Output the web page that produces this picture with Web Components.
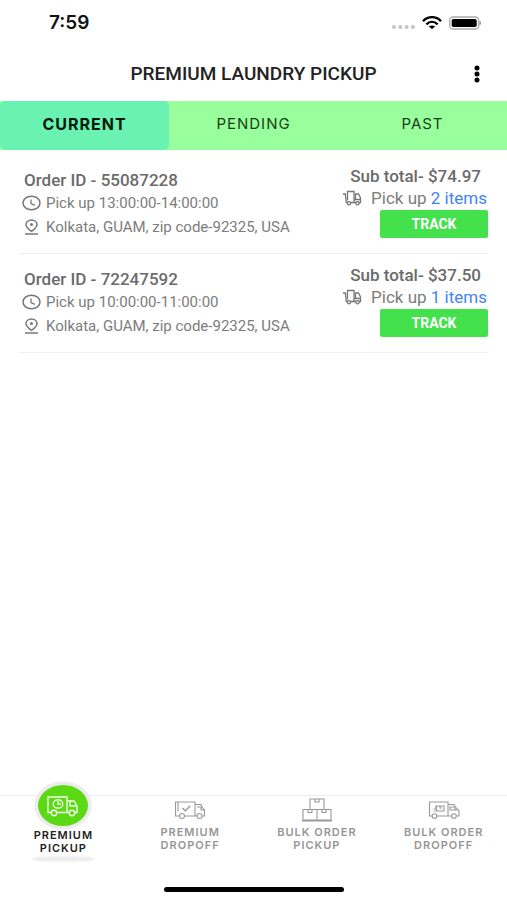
<!DOCTYPE html>
<html lang="en">
<head>
<meta charset="utf-8">
<meta name="viewport" content="width=device-width, initial-scale=1">
<title>Premium Laundry Pickup</title>
<style>
html, body { margin: 0; }
body { font-family: Roboto, "Liberation Sans", sans-serif; background: #fff; color: #222; }
</style>
</head>
<body>
<laundry-app></laundry-app>
<script>
const define = (name, html, setup) => {
  const template = document.createElement('template');
  template.innerHTML = html;
  customElements.define(name, class extends HTMLElement {
    constructor() {
      super();
      this.attachShadow({ mode: 'open' }).append(template.content.cloneNode(true));
    }
    connectedCallback() { if (setup) setup(this, this.shadowRoot); }
  });
};

define('status-bar', `
<style>
:host { display: flex; align-items: center; justify-content: space-between; height: 46px; padding: 0 26px 0 49px; color: #111; }
time { font-family: Inter, sans-serif; font-size: 19px; line-height: 24px; font-weight: 600; }
.signals { display: flex; align-items: center; gap: 7px; }
svg { display: block; }
</style>
<time>7:59</time>
<div class="signals">
  <svg width="23" height="16" viewBox="0 0 23 16" fill="#c4c4c4" aria-hidden="true"><circle cx="2" cy="12" r="2"/><circle cx="8.3" cy="12" r="2"/><circle cx="14.6" cy="12" r="2"/><circle cx="20.9" cy="12" r="2"/></svg>
  <svg width="20" height="14" viewBox="0 0 20 14" aria-hidden="true"><g fill="none" stroke="#000" stroke-width="2.4"><path d="M1 5.2C6-.2 14-.2 19 5.2"/><path d="M4.4 8.3c3.3-3.2 7.9-3.2 11.2 0"/></g><path d="M6.9 10.5c1.9-1.5 4.3-1.5 6.2 0L10 13z"/></svg>
  <svg width="32" height="14" viewBox="0 0 32 14" aria-hidden="true"><rect x=".7" y="1" width="29" height="12" rx="3.5" fill="#fff" stroke="#aaa" stroke-width="1.3"/><rect x="2.7" y="3" width="25" height="8" rx="1.8"/><path d="M31 5.3q1 1.7 0 3.4z" fill="#888" stroke="#888" stroke-width=".7"/></svg>
</div>`);

define('page-header', `
<style>
:host { display: grid; grid-template-columns: 1fr auto 1fr; align-items: center; height: 55px; padding: 0 18px; }
h1 { grid-column: 2; margin: 0; font-size: 19px; line-height: 24px; font-weight: 500; color: #222; }
button { justify-self: end; width: 24px; height: 32px; padding: 0; border: 0; background: none; }
svg { display: block; margin: auto; }
</style>
<h1><slot></slot></h1>
<button type="button" aria-label="More options"><svg width="8" height="18" viewBox="0 0 8 18"><circle cx="4" cy="3" r="2.5"/><circle cx="4" cy="9" r="2.5"/><circle cx="4" cy="15" r="2.5"/></svg></button>`);

define('tab-bar', `
<style>
:host { display: grid; grid-template-columns: repeat(3, 1fr); height: 49px; background: #99ff9c; }
</style>
<slot></slot>`);

define('tab-item', `
<style>
:host { display: block; }
button { width: 100%; height: 100%; padding: 0 0 3px; border: 0; border-radius: 5px; background: none; font-family: Inter, sans-serif; font-size: 15px; line-height: 20px; font-weight: 400; letter-spacing: 1px; color: #174018; }
:host([active]) button { background: #6af2b2; color: #001a0b; font-size: 16px; font-weight: 700; }
</style>
<button type="button"><slot></slot></button>`, (host, root) => {
  root.querySelector('button').setAttribute('aria-pressed', host.hasAttribute('active'));
});

define('order-card', `
<style>
:host { display: flex; justify-content: space-between; height: 98px; margin: 0 19px; border-bottom: 1px solid #efefef; color: #7c7c7c; }
.info { padding: 14px 0 0 3px; }
h2 { margin: 0 0 0 2px; font-size: 17px; line-height: 22px; font-weight: 500; color: #6b6b6b; }
p { margin: 0; display: flex; align-items: center; gap: 5px; height: 24px; font-size: 15px; line-height: 24px; white-space: nowrap; }
svg { flex: none; }
.summary { display: flex; flex-direction: column; align-items: flex-end; padding-top: 10px; }
.total { height: 22px; line-height: 22px; padding-right: 7px; font-size: 17px; font-weight: 500; color: #6b6b6b; }
.count { height: 22px; line-height: 22px; gap: 9px; font-size: 17px; padding-right: 1px; }
a { color: #3f86ee; text-decoration: none; }
button { width: 108px; height: 28px; margin-top: 1px; padding: 0; border: 0; border-radius: 2px; background: #43e24c; color: #fff; font-family: inherit; font-size: 14px; line-height: 20px; font-weight: 700; }
</style>
<div class="info">
  <h2>Order ID - <span id="number"></span></h2>
  <p><svg width="19" height="16" viewBox="0 0 19 16" fill="none" stroke="#777" aria-hidden="true"><ellipse cx="9.5" cy="8" rx="8.5" ry="6.8" stroke-width="1.5"/><path d="M9 4.5v4l3.8 1.8" stroke-width="1.3"/></svg><span>Pick up <span id="slot"></span></span></p>
  <p><svg width="19" height="16" viewBox="0 0 19 16" fill="none" stroke="#777" stroke-width="1.5" aria-hidden="true"><path d="M9.5 12.4C6 9.8 4 7.7 4 5.7 4 3 6.5 1 9.5 1S15 3 15 5.7c0 2-2 4.1-5.5 6.7z"/><path d="M3 15h13"/><circle cx="9.5" cy="5.6" r="1.5" fill="#777" stroke="none"/></svg><span id="place"></span></p>
</div>
<div class="summary">
  <div class="total">Sub total- <span id="total"></span></div>
  <p class="count"><svg width="20" height="16" viewBox="0 0 20 16" fill="none" stroke="#777" stroke-width="1.3" aria-hidden="true"><path d="M1 4h2.3l1 8.5h1.2"/><path d="M5.500 10.500V1.500h6.500v11H8.500"/><path d="M12 9.500h6.500M13.500 9.500V4h3l2 4v4.500H17M14 12.500h-2.500"/><circle cx="7" cy="13.200" r="1.600"/><circle cx="15.500" cy="13.200" r="1.600"/></svg><span>Pick up <a href="#items"><span id="items"></span> items</a></span></p>
  <button type="button">TRACK</button>
</div>`, (host, root) => {
  for (const key of ['number', 'slot', 'place', 'total', 'items']) {
    root.getElementById(key).textContent = host.getAttribute('data-' + key);
  }
});

define('nav-item', `
<style>
:host { display: block; }
a { display: flex; flex-direction: column; align-items: center; text-align: center; text-decoration: none; color: #969696; font-family: Inter, sans-serif; font-size: 11px; line-height: 13px; font-weight: 600; letter-spacing: 1px; }
.icon { display: grid; place-items: center; box-sizing: border-box; width: 56px; height: 44px; padding-top: 12px; }
:host([active]) a { color: #222; }
:host([active]) .icon { height: 47px; padding: 0; border: 3px solid #ececec; border-radius: 50%; background: #5bd914; box-shadow: 0 0 2px #ddd; }
.shade { display: none; width: 62px; height: 4px; margin-top: 2px; border-radius: 50%; background: #ededed; box-shadow: 0 0 3px #e6e6e6; }
:host([active]) .shade { display: block; }
</style>
<a href="#"><span class="icon"><slot name="icon"></slot></span><span class="label"><slot></slot></span><span class="shade"></span></a>`, (host, root) => {
  if (host.hasAttribute('active')) root.querySelector('a').setAttribute('aria-current', 'page');
});

define('bottom-nav', `
<style>
:host { display: block; position: relative; }
nav { display: grid; grid-template-columns: repeat(4, 1fr); align-items: start; padding-bottom: 26px; }
nav::before { content: ""; position: absolute; z-index: -1; top: 13px; left: 0; right: 0; border-top: 1px solid #eee; }
.home { width: 180px; height: 5px; margin: 0 auto; border-radius: 3px; background: #000; }
svg { display: block; }
</style>
<nav aria-label="Main">
  <nav-item active><svg slot="icon" width="34" height="22" viewBox="0 0 34 22" fill="none" stroke="#f1ffe9" stroke-width="1.4"><path d="M5 17.5H2V2h19v15.5H11M21 6h7l3 5v6.5h-2M21 17.5h2M24 6v5h6.5"/><circle cx="8" cy="18" r="2.7"/><circle cx="26" cy="18" r="2.7"/><ellipse cx="12" cy="9" rx="4.8" ry="4.3"/><path d="M12 6v3h3"/></svg>PREMIUM<br>PICKUP</nav-item>
  <nav-item><svg slot="icon" width="32" height="20" viewBox="0 0 32 20" fill="none" stroke="#999" stroke-width="1.1"><path d="M5.5 16H1.5V2H21v14H10.5M4 2v9.5M21 4.5h6l2 4 1.5 1.5v6H28M21 16h2M23 7h4v3h3.5"/><circle cx="8" cy="16" r="2.5"/><circle cx="25.5" cy="16" r="2.5"/><path d="M8.5 8l2.8 2.8 5-5" stroke-width="1.4"/></svg>PREMIUM<br>DROPOFF</nav-item>
  <nav-item><svg slot="icon" width="32" height="26" viewBox="0 0 32 26" fill="none" stroke="#999" stroke-width="1.1"><path d="M9 12V2h14v10M14 2v3h4V2M2 22.5v-10h28v10M16 12.5v10M7 12.5v3h4v-3M21 12.5v3h4v-3"/><path d="M1 23.5h30" stroke-width="2"/></svg>BULK ORDER<br>PICKUP</nav-item>
  <nav-item><svg slot="icon" width="32" height="20" viewBox="0 0 32 20" fill="none" stroke="#999" stroke-width="1.1"><path d="M4 16H1.5V2H20v14H9M20 4.5h6l3 4.5 2 2v5h-2.5M20 16h4M22 7h4l2 3h-6zM8 6h8v5H9zM7 7h2M5.5 9H9M6 11h3M12 6v2h2"/><circle cx="6.5" cy="16" r="2.3"/><circle cx="26" cy="16" r="2.3"/></svg>BULK ORDER<br>DROPOFF</nav-item>
</nav>
<div class="home"></div>`);

define('laundry-app', `
<style>
:host { display: flex; flex-direction: column; min-height: 100vh; position: relative; z-index: 0; }
main { flex: 1; padding-top: 5px; }
bottom-nav { padding-bottom: 8px; }
</style>
<status-bar></status-bar>
<page-header>PREMIUM LAUNDRY PICKUP</page-header>
<tab-bar><tab-item active>CURRENT</tab-item><tab-item>PENDING</tab-item><tab-item>PAST</tab-item></tab-bar>
<main>
  <order-card data-number="55087228" data-slot="13:00:00-14:00:00" data-place="Kolkata, GUAM, zip code-92325, USA" data-total="$74.97" data-items="2"></order-card>
  <order-card data-number="72247592" data-slot="10:00:00-11:00:00" data-place="Kolkata, GUAM, zip code-92325, USA" data-total="$37.50" data-items="1"></order-card>
</main>
<bottom-nav></bottom-nav>`);
</script>
</body>
</html>
